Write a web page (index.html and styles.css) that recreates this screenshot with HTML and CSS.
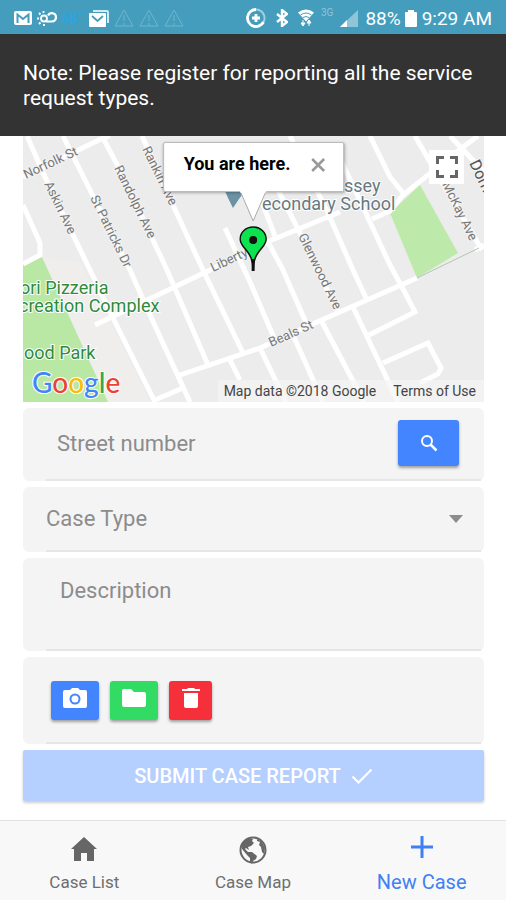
FILE: index.html
```html
<!DOCTYPE html>
<html lang="en">
<head>
  <meta charset="utf-8">
  <meta name="viewport" content="width=device-width, initial-scale=1">
  <title>New Case</title>
  <link rel="stylesheet" href="styles.css">
</head>
<body>
  <div class="status-bar">
    <div class="status-left">
      <svg width="18" height="14" viewBox="0 0 18 14"><rect width="18" height="14" rx="2" fill="#fff"/><path d="M3.500 12V3.500L9 8l5.500-4.500V12" fill="none" stroke="#459dbd" stroke-width="2"/></svg>
      <svg width="20" height="18" viewBox="0 0 20 18" fill="none" stroke="#fff"><circle cx="7" cy="9.500" r="3" stroke-width="1.800"/><path d="M9 12.500h6a4.200 4.200 0 1 0-4-6" stroke-width="2.200"/><path d="M6.500 2v2M2 4l1.500 1.500M0 9.500h2M2 15L3.500 13.500M7 15v2" stroke-width="1.800"/></svg>
      <span class="temp">68°</span>
      <svg width="20" height="17" viewBox="0 0 20 17"><path d="M4 2V0h14q2 0 2 2v11h-2V2z" fill="#d3eaf2"/><rect y="3" width="17" height="14" rx="1" fill="#fff"/><path d="M3 6l5.500 5L14 6" fill="none" stroke="#459dbd" stroke-width="1.800"/></svg>
      <svg class="warn" width="20" height="18" viewBox="0 0 20 18"><path d="M10 1L19 17H1zM10 6v6M10 14v2"/></svg>
      <svg class="warn" width="20" height="18" viewBox="0 0 20 18"><path d="M10 1L19 17H1zM10 6v6M10 14v2"/></svg>
      <svg class="warn" width="20" height="18" viewBox="0 0 20 18"><path d="M10 1L19 17H1zM10 6v6M10 14v2"/></svg>
    </div>
    <div class="status-right">
      <svg width="20" height="20" viewBox="0 0 20 20" fill="none" stroke="#fff"><path d="M10 1.500a8.500 8.500 0 1 0 7.500 12.500" stroke-width="2.800"/><path d="M10 1.500a8.500 8.500 0 0 1 7.500 12.500" stroke-width="2" opacity=".5"/><path d="M10 6v8M6 10h8" stroke-width="2.800"/></svg>
      <svg class="gap-lg" width="12" height="18" viewBox="0 0 12 18"><path d="M1 5l10 8-5 4V1l5 4-10 8" fill="none" stroke="#fff" stroke-width="2.400"/></svg>
      <svg class="gap-lg" width="16" height="18" viewBox="0 0 16 18"><path d="M0 3.500q8-6 16 0L8 12.500z" fill="#fff"/><path d="M2.500 6q5.500-4 11 0M5 8.500q3-2 6 0" fill="none" stroke="#459dbd"/><path d="M5 11v5M3 14l2 3 2-3zM11 17v-5M9 14l2-3 2 3z" fill="#fff" stroke="#fff"/></svg>
      <span class="net">3G</span>
      <svg width="18" height="17" viewBox="0 0 18 17"><path d="M18 0v17H0z" fill="#8fc5d9"/><path d="M7 10v7H0z" fill="#fff"/></svg>
      <span class="pct">88%</span>
      <svg width="12" height="17" viewBox="0 0 12 17"><path d="M3 0h6v2h2q1 0 1 1v13q0 1-1 1H1q-1 0-1-1V3q0-1 1-1h2z" fill="#fff"/></svg>
      <span class="time">9:29 AM</span>
    </div>
  </div>

  <div class="note">Note: Please register for reporting all the service request types.</div>

  <main class="content">
    <div class="map">
      <!-- street map -->
      <svg class="map-canvas" viewBox="23 136 461 266" preserveAspectRatio="xMidYMid slice">
        <rect x="23" y="136" width="461" height="266" fill="#ececec"/>
        <path d="M42 258L80 262 150 402H108z" fill="#f0eeed"/>
        <path d="M23 264L42 257 108 402H23z" fill="#b9e8a5"/>
        <path d="M420 185L390 213 417 278 458 253z" fill="#bdeaaa"/>
        <g class="roads">
          <path d="M23 177L103 138 110 136"/>
          <path d="M27 136L45 177 90 270 113 318 155 402"/>
          <path d="M63 136L90 190 130 270 150 315 190 402"/>
          <path d="M103 138L120 170 167 270 208 365"/>
          <path d="M142 136L172 203 203 270 243 353"/>
          <path d="M225 228L250 282 275 340"/>
          <path d="M258 192L275 236M268 242L283 270 307 325"/>
          <path d="M278 190L300 233 338 312"/>
          <path d="M290 136L328 213 353 270 367 300"/>
          <path d="M340 158L390 265 402 287 415 312 369 335"/>
          <path d="M370 136L390 177 404 194"/>
          <path d="M415 136L430 162 482 250"/>
          <path d="M450 136L484 172"/>
          <path d="M478 136L463 147 403 195 390 211 372 219"/>
          <path d="M95 325L210 270 267 242 340 212"/>
          <path d="M180 375L260 348 317 322 417 278"/>
          <path d="M260 348L286 402M293 335L323 402M322 322L364 402M353 307L398 402"/>
          <path d="M383 363L428 343 441 368 438 374 420 383"/>
          <path d="M230 360L240 380M155 400L183 388M475 250L484 245"/>
          <path d="M23 205L40 243V255L23 264"/>
        </g>
        <path d="M417 278L479 248" stroke="#b5c4b5" fill="none"/>
        <path d="M225 191h20l-6 8-6 9-5-10z" fill="#6c92a6"/>
        <g class="street-names">
          <text transform="translate(26 179) rotate(-25)">Norfolk St</text>
          <text transform="translate(44 184) rotate(64)">Askin Ave</text>
          <text transform="translate(90 198) rotate(64)">St Patricks Dr</text>
          <text transform="translate(114 168) rotate(64)">Randolph Ave</text>
          <text transform="translate(142 149) rotate(64)">Rankin Ave</text>
          <text transform="translate(213 272) rotate(-25)">Liberty</text>
          <text transform="translate(298 236) rotate(64)">Glenwood Ave</text>
          <text transform="translate(271 347) rotate(-24)">Beals St</text>
          <text transform="translate(442 184) rotate(64)">McKay Ave</text>
          <text class="major" transform="translate(469 163) rotate(64)">Dom.</text>
        </g>
        <g class="place">
          <text x="344" y="192">ssey</text>
          <text x="262" y="210">econdary School</text>
        </g>
        <g class="park">
          <text x="20" y="294">ori Pizzeria</text>
          <text x="19" y="312">creation Complex</text>
          <text x="24" y="359">ood Park</text>
        </g>
      </svg>
      <div class="info-window">
        <div class="info-box">
          <strong>You are here.</strong>
          <button class="close" type="button" aria-label="Close">
            <svg width="14" height="14" viewBox="0 0 14 14"><path d="M1 1l12 12M13 1L1 13" stroke="#999" stroke-width="2.500"/></svg>
          </button>
        </div>
        <svg class="tail" width="32" height="32" viewBox="0 0 32 32"><path d="M3 0L16 30 29 0" fill="#fff" stroke="#aaa"/><path d="M3 0h26" stroke="#fff" stroke-width="3"/></svg>
        <svg class="pin" width="28" height="46" viewBox="0 0 28 46"><path d="M14 45C14 34 11 29 7 24 4 20 1 18 1 13a13 12 0 0 1 26 0C27 18 24 20 21 24 17 29 14 34 14 45z" fill="#0ce34e" stroke="#111" stroke-width="1.500"/><path d="M14 33v12" stroke="#111" stroke-width="3"/><circle cx="14" cy="14" r="4" fill="#111"/></svg>
      </div>
      <button class="fullscreen" type="button" aria-label="Full screen">
        <svg width="22" height="22" viewBox="0 0 22 22"><path d="M1.500 8V1.500H8M14 1.500h6.500V8M20.500 14v6.500H14M8 20.500H1.500V14" fill="none" stroke="#666" stroke-width="3"/></svg>
      </button>
      <div class="google"><span class="b">G</span><span class="r">o</span><span class="y">o</span><span class="b">g</span><span class="g">l</span><span class="r">e</span></div>
      <div class="map-credit">
        <span>Map data ©2018 Google</span>
        <a href="#">Terms of Use</a>
      </div>
    </div>

    <form class="case-form">
      <div class="card">
        <div class="row row-street">
          <input class="field" type="text" placeholder="Street number" aria-label="Street number">
          <button class="btn blue search" type="button" aria-label="Search">
            <svg width="18" height="18" viewBox="0 0 18 18" fill="none" stroke="#fff"><circle cx="7" cy="7" r="5" stroke-width="2"/><path d="M10.500 10.500l6 6" stroke-width="2.500"/></svg>
          </button>
        </div>
      </div>
      <div class="card">
        <div class="row row-type">
          <select class="field" aria-label="Case Type">
            <option>Case Type</option>
          </select>
          <svg class="arrow" width="14" height="8" viewBox="0 0 14 8"><path d="M0 0h14L7 8z" fill="#8c8c8c"/></svg>
        </div>
      </div>
      <div class="card">
        <div class="row row-desc">
          <textarea class="field" placeholder="Description" aria-label="Description"></textarea>
        </div>
      </div>
      <div class="card">
        <div class="row row-photo">
          <button class="btn blue" type="button" aria-label="Take photo">
            <svg width="24" height="22" viewBox="0 0 24 22"><path d="M2 3h5l2-2h6l2 2h5q2 0 2 2v14q0 2-2 2H2q-2 0-2-2V5q0-2 2-2z" fill="#fff"/><circle cx="12" cy="12" r="4.500" fill="#fff" stroke="#4285ff" stroke-width="2"/></svg>
          </button>
          <button class="btn green" type="button" aria-label="Choose file">
            <svg width="24" height="18" viewBox="0 0 24 18"><path d="M2 0h7l3 3h10q2 0 2 2v11q0 2-2 2H2q-2 0-2-2V2q0-2 2-2z" fill="#fff"/></svg>
          </button>
          <button class="btn red" type="button" aria-label="Delete">
            <svg width="18" height="22" viewBox="0 0 18 22"><path d="M0 2h5l1-1h6l1 1h5v2H0zM2 6h14v13q0 2-2 2H4q-2 0-2-2z" fill="#fff"/></svg>
          </button>
        </div>
      </div>
      <button class="submit" type="submit">SUBMIT CASE REPORT
        <svg width="22" height="16" viewBox="0 0 22 16"><path d="M1.500 8.500l6 6L20.500 1.500" fill="none" stroke="#fff" stroke-width="2.200"/></svg>
      </button>
    </form>
  </main>

  <nav class="tabs">
    <a class="tab" href="#">
      <svg width="26" height="26" viewBox="0 0 26 26"><path d="M13 1L26 13h-3v12h-7v-8h-6v8H3V13H0z" fill="#666"/></svg>
      Case List
    </a>
    <a class="tab" href="#">
      <svg width="28" height="28" viewBox="0 0 28 28"><circle cx="14" cy="14" r="12.500" fill="none" stroke="#666" stroke-width="2"/><path d="M5 5l5-3 4 1-1 2 2 2-3 3-3 1 1 3-3-2-1 1 3 3 4 0 5 4-1 3-3 2-1 3-2-2v-4l-3-3-5-6-1-4zM18 3l5 3 3 6-1 6-2-2-1-5-2-2 1-3-3-1z" fill="#666"/></svg>
      Case Map
    </a>
    <a class="tab active" href="#">
      <svg width="22" height="22" viewBox="0 0 22 22"><path d="M11 0v22M0 11h22" stroke="#3f80f5" stroke-width="3"/></svg>
      New Case
    </a>
  </nav>
</body>
</html>
```
FILE: styles.css
```css
* {
  box-sizing: border-box;
}
body {
  margin: 0;
  min-height: 100vh;
  display: flex;
  flex-direction: column;
  font-family: Roboto, "Liberation Sans", sans-serif;
  background-color: #fff;
}
svg {
  display: block;
  flex: none;
}
button {
  font-family: inherit;
  border: none;
  padding: 0;
  cursor: pointer;
}

/* phone status bar */
.status-bar {
  height: 34px;
  padding: 2px 14px 0;
  display: flex;
  justify-content: space-between;
  background-color: #459dbd;
  color: #fff;
}
.status-left, .status-right {
  display: flex;
  align-items: center;
}
.status-left {
  gap: 5px;
}
.temp {
  width: 22px;
  font-size: 14px;
  font-weight: bold;
  color: #2ba5df;
}
.warn path {
  fill: none;
  stroke: #70b5cd;
  stroke-width: 1;
}
.gap-lg {
  margin-left: 10px;
}
.net {
  margin: 0 7px;
  align-self: flex-start;
  padding-top: 5px;
  font-size: 10px;
  color: #8fc5d9;
}
.pct, .time {
  font-size: 19px;
}
.pct {
  margin: 0 4px 0 7px;
}
.time {
  margin-left: 5px;
}

.note {
  padding: 27px 23px 25px;
  background-color: #333;
  color: #fff;
  font-size: 21px;
  line-height: 25px;
}
.content {
  flex: 1;
  padding: 0 22px 19px 23px;
}

/* map */
.map {
  position: relative;
  height: 266px;
  overflow: hidden;
}
.map-canvas {
  width: 100%;
  height: 100%;
}
.roads {
  fill: none;
  stroke: #fff;
  stroke-width: 5;
}
.street-names {
  font-size: 13px;
  fill: #777;
  stroke: #f3f3f3;
  stroke-width: 2;
  paint-order: stroke;
}
.street-names .major {
  font-size: 16px;
  fill: #555;
}
.place, .park {
  font-size: 18px;
  stroke: #fff;
  stroke-width: 2;
  paint-order: stroke;
}
.place {
  fill: #66797f;
}
.park {
  fill: #2f8a3c;
}
.info-window {
  position: absolute;
  top: 6px;
  left: 50%;
  transform: translateX(-50%);
  display: flex;
  flex-direction: column;
  align-items: center;
}
.info-box {
  display: flex;
  align-items: flex-start;
  gap: 21px;
  height: 50px;
  padding: 11px 18px 0 20px;
  border: 1px solid #bbb;
  border-radius: 2px;
  background-color: #fff;
  box-shadow: 0 1px 3px rgba(0, 0, 0, 0.3);
  font-size: 18px;
  line-height: 20px;
  white-space: nowrap;
}
.close {
  padding-top: 4px;
  background: none;
}
.tail {
  position: relative;
  margin-top: -1px;
}
.pin {
  margin-top: 3px;
}
.fullscreen {
  position: absolute;
  top: 14px;
  right: 20px;
  width: 35px;
  height: 34px;
  display: flex;
  align-items: center;
  justify-content: center;
  background-color: #fff;
}
.google {
  position: absolute;
  left: 9px;
  bottom: 1px;
  font-family: Lato, sans-serif;
  font-size: 28px;
  line-height: 38px;
  font-weight: 500;
  -webkit-text-stroke: 2px #fff;
  paint-order: stroke;
}
.b { color: #4285f4; }
.r { color: #ea4335; }
.y { color: #fbbc05; }
.g { color: #34a853; }
.map-credit {
  position: absolute;
  right: 0;
  bottom: 0;
  display: flex;
  gap: 17px;
  padding: 0 8px 0 6px;
  background-color: rgba(245, 245, 245, 0.7);
  font-size: 14px;
  line-height: 22px;
  color: #444;
}
.map-credit a {
  color: #444;
  text-decoration: none;
}

/* form */
.case-form {
  display: flex;
  flex-direction: column;
  gap: 6px;
  margin-top: 6px;
}
.card {
  padding: 0 3px 0 23px;
  border-radius: 6px;
  background-color: #f4f4f4;
}
.row {
  display: flex;
  border-bottom: 2px solid #e6e6e6;
}
.row-street {
  height: 73px;
  padding: 12px 22px 0 11px;
}
.row-type {
  height: 65px;
  align-items: center;
  padding-right: 18px;
}
.row-desc {
  height: 93px;
  padding: 20px 22px 0 14px;
}
.row-photo {
  height: 87px;
  padding: 24px 0 0 5px;
  gap: 11px;
}
.field {
  flex: 1;
  min-width: 0;
  padding: 0;
  border: none;
  outline: none;
  background: none;
  appearance: none;
  resize: none;
  font-family: inherit;
  font-size: 22px;
  line-height: 26px;
  color: #8c8c8c;
}
.field::placeholder {
  color: #8c8c8c;
}
.row-street .field {
  height: 46px;
}
.btn {
  display: flex;
  justify-content: center;
  width: 48px;
  height: 39px;
  padding-top: 6px;
  border-radius: 3px;
  box-shadow: 0 2px 3px rgba(0, 0, 0, 0.35);
}
.blue { background-color: #4285ff; }
.green { background-color: #32db64; }
.red {
  width: 43px;
  background-color: #f5303a;
}
.green svg {
  margin-top: 2px;
}
.search {
  width: 61px;
  height: 46px;
  align-items: center;
  padding: 0;
}
.submit {
  display: flex;
  align-items: center;
  justify-content: center;
  gap: 10px;
  height: 51px;
  border-radius: 2px;
  background-color: #b5cfff;
  box-shadow: 0 2px 3px rgba(0, 0, 0, 0.2);
  color: #fff;
  font-size: 20px;
  font-weight: 500;
}

/* bottom tabs */
.tabs {
  display: flex;
  height: 80px;
  border-top: 1px solid #e2e2e2;
  background-color: #f8f8f8;
}
.tab {
  flex: 1;
  display: flex;
  flex-direction: column;
  align-items: center;
  justify-content: space-between;
  padding: 15px 0 7px;
  color: #6e6e6e;
  font-size: 17px;
  line-height: 22px;
  text-decoration: none;
}
.active {
  color: #3f80f5;
  font-size: 20px;
}
```
